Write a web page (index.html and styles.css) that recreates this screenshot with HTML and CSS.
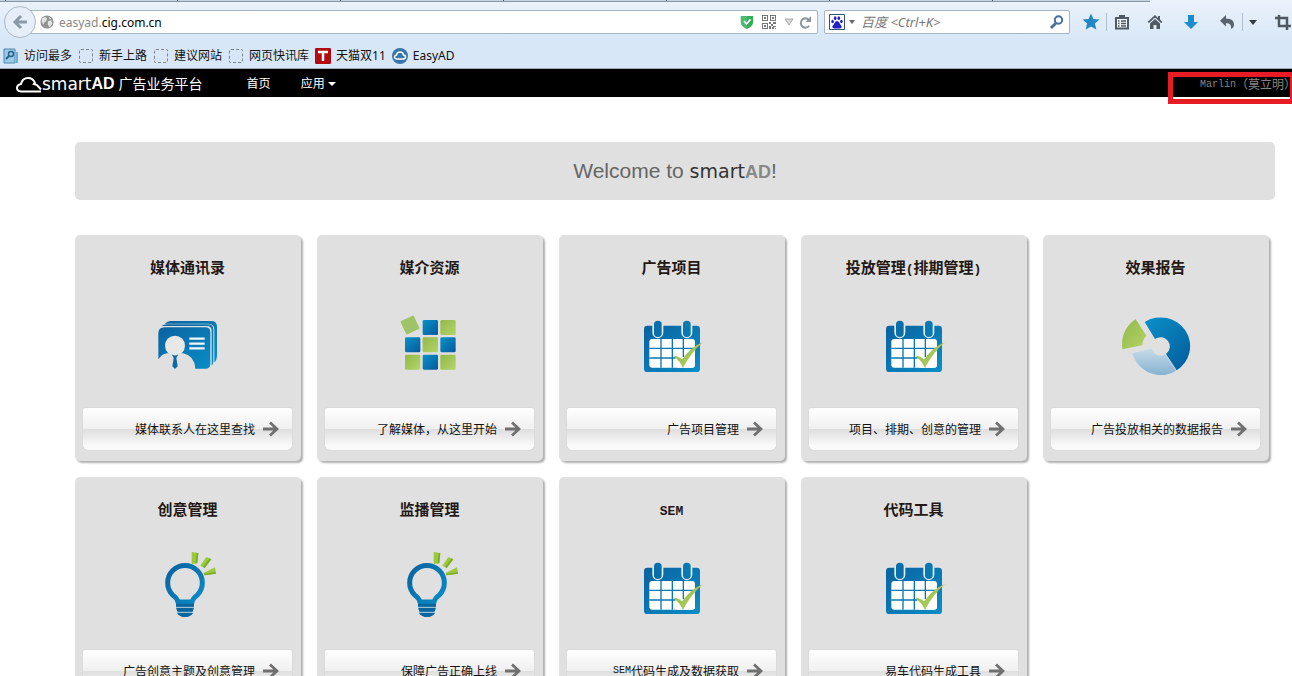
FILE: index.html
```html
<!DOCTYPE html>
<html lang="zh-CN">
<head>
<meta charset="utf-8">
<title>smartAD 广告业务平台</title>
<link rel="stylesheet" href="styles.css">
</head>
<body>
<svg class="defs" aria-hidden="true">
  <defs>
    <linearGradient id="blue" x1="0" y1="0" x2="1" y2="1"><stop offset="0" stop-color="#0a62a0"/><stop offset="1" stop-color="#0a8dc6"/></linearGradient>
    <linearGradient id="blueDown" x1="0" y1="0" x2="1" y2="1"><stop offset="0" stop-color="#0a92c8"/><stop offset="1" stop-color="#045a9c"/></linearGradient>
    <linearGradient id="green" x1="0" y1="0" x2="1" y2="1"><stop offset="0" stop-color="#92b848"/><stop offset="1" stop-color="#b4d468"/></linearGradient>
    <linearGradient id="pale" x1="0" y1="0" x2="0" y2="1"><stop offset="0" stop-color="#c6dbe8"/><stop offset="1" stop-color="#86b2d2"/></linearGradient>
  </defs>
  <symbol id="i-contacts" viewBox="234 225 240 240">
    <path d="M284 281q8-8 18-8h122q17 0 17 17v88q0 12-8 20V300q0-19-18-19z" fill="url(#blue)"/>
    <path d="M274 288q8-5 17-5h123q16 0 16 16v95q0 8-5 13V303q0-15-15-15z" fill="url(#blue)"/>
    <path d="M284 292h122q15 0 15 15v94q0 15-15 15h-30q-2-38-36-46H290q-14 2-25 18v-77q0-19 19-19z" fill="url(#blue)"/>
    <circle cx="315" cy="347" r="30" fill="#e8e8e8"/>
    <path d="M266 416q0-36 28-45l14 4h14l14-4q38 9 38 45z" fill="#e0e0e0"/>
    <path d="M305 373q10 7 20 0l-6 11 4 25-8 8-8-8 4-25z" fill="#0a6aa6"/>
    <path d="M358 326h46M358 341h46M358 355h46" stroke="#eef6fb" stroke-width="7"/>
  </symbol>
  <symbol id="i-tiles" viewBox="234 225 240 240">
    <rect x="272" y="263" width="44" height="44" rx="3" fill="#9fc468" transform="rotate(-25 294 285)"/>
    <g fill="url(#blueDown)"><rect x="332" y="270" width="46" height="45" rx="4"/><rect x="279" y="322" width="46" height="45" rx="4"/><rect x="385" y="322" width="46" height="45" rx="4"/><rect x="332" y="374" width="46" height="45" rx="4"/></g>
    <g fill="url(#green)"><rect x="385" y="270" width="46" height="45" rx="4"/><rect x="332" y="322" width="46" height="45" rx="4"/><rect x="279" y="374" width="46" height="45" rx="4"/><rect x="385" y="374" width="46" height="45" rx="4"/></g>
  </symbol>
  <symbol id="i-calendar" viewBox="234 225 240 240">
    <rect x="270" y="287" width="168" height="139" rx="10" fill="url(#blue)"/>
    <path d="M295 285v23a16.500 16.500 0 0 0 33 0v-23zM382 285v23a16.500 16.500 0 0 0 33 0v-23z" fill="#e0eef5"/>
    <rect x="300" y="272" width="23" height="49" rx="11" fill="#0a6ea9"/><rect x="387" y="272" width="23" height="49" rx="11" fill="#0a78b2"/>
    <rect x="286" y="327" width="137" height="86" rx="9" fill="#fff"/>
    <path d="M321 327v86M355 327v86M388 327v86M286 355h137M286 384h137" stroke="#0a78b2" stroke-width="4"/>
    <path d="M366 382l23-1 34-22v45q0 9-9 9h-44l-10-18z" fill="#fff"/>
    <path d="M359 377q12 0 25 11 28-38 63-52-36 32-60 77-9-19-28-36z" fill="url(#green)"/>
  </symbol>
  <symbol id="i-pie" viewBox="234 225 240 240">
    <path d="M320 276A88 86 0 0 1 416 421L384 372A27 27 0 0 0 351 327z" fill="url(#blueDown)"/>
    <path d="M282 370L341 356A27 27 0 0 0 382 373L414 422Q390 437 360 435 304 428 282 370z" fill="url(#pale)"/>
    <path d="M293 267L325 317Q313 329 313 346L253 358Q246 300 293 267z" fill="url(#green)"/>
  </symbol>
  <symbol id="i-bulb" viewBox="234 231 240 240">
    <path d="M324 396q-4-13-16-21a52 52 0 1 1 74 0q-12 8-16 21z" fill="none" stroke="url(#blue)" stroke-width="15"/>
    <path d="M318 401h54v8q0 9-4 15v7q-9 10-23 10t-23-10v-7q-4-6-4-15z" fill="#0a659f"/>
    <path d="M318 412h54M320 427h50" stroke="#b4d2e4" stroke-width="3"/>
    <path d="M365 246l20 3-3 30-17 4zM391 287l18-26 15 7-20 26zM401 309l34-17 3 19-35 5z" fill="#9cc93a"/>
    <path d="M380 249l5 1-3 29-6 2zM419 265l5 3-20 26-5-3zM402 311l36-5v5l-35 5z" fill="#7dac2c"/>
  </symbol>
  <symbol id="i-arrow" viewBox="0 0 16 16"><path d="M0 8h14M7 1.500L14 8 7 14.500" fill="none" stroke="#707070" stroke-width="2.800"/></symbol>
</svg>

<div class="window">
  <header class="chrome">
    <div class="tabs"></div>
    <div class="toolbar">
      <button class="back" aria-label="后退"><svg viewBox="0 0 16 16" width="16" height="16"><path d="M15 8H3M9 2L3 8l6 6" fill="none" stroke="#8a9aab" stroke-width="3"/></svg></button>
      <div class="address">
        <svg viewBox="0 0 16 16" width="14" height="14"><circle cx="8" cy="8" r="7.500" fill="#929292"/><path d="M2 4l4-2 2 2-1 3-2 1-1 3-2-3zM9 7l4-1 1 4-3 4-2-3zM10 2l3 2-2 1z" fill="#e4e4e4"/></svg>
        <label for="url">easyad.</label><input id="url" type="text" value="cig.com.cn">
        <button aria-label="安全"><svg viewBox="0 0 16 16" width="14" height="16"><path d="M1 1h14v7q0 5-7 8-7-3-7-8z" fill="#36ad57"/><path d="M1 1h7v15q-7-3-7-8z" fill="#4cba72"/><path d="M4.500 7l3 3 4.500-5" fill="none" stroke="#fff" stroke-width="1.800"/></svg></button>
        <button aria-label="二维码"><svg viewBox="0 0 14 14" width="14" height="14" fill="#777"><path fill-rule="evenodd" d="M0 0h6v6H0zM1 1v4h4V1zM8 0h6v6H8zM9 1v4h4V1zM0 8h6v6H0zM1 9v4h4V9z"/><path d="M2 2h2v2H2zM10 2h2v2h-2zM2 10h2v2H2zM7 7h2v2H7zM9 9h2v2H9zM11 7h3v2h-3zM7 11h2v3H7zM11 11h3v1h-3zM10 12h2v2h-2zM13 13h1v1h-1z"/></svg></button>
        <button aria-label="历史"><svg viewBox="0 0 10 8" width="10" height="8"><path d="M1 1h8L5 7z" fill="#d8d8d8" stroke="#aaa"/></svg></button>
        <button class="reload" aria-label="刷新"><svg viewBox="0 0 14 14" width="13" height="13"><path d="M11 10.500A5 5 0 1 1 10.500 4" fill="none" stroke="#8e979e" stroke-width="2.200"/><path d="M13 0v6.500H7z" fill="#8e979e"/></svg></button>
      </div>
      <div class="search">
        <button class="engine" aria-label="百度"><svg viewBox="0 0 16 16" width="16" height="16"><path d="M.5.500h15v15H.5z" fill="#fff" stroke="#33566f"/><g fill="#2420c8"><ellipse cx="3.600" cy="7.500" rx="1.300" ry="1.800"/><ellipse cx="6.200" cy="4.200" rx="1.300" ry="1.900"/><ellipse cx="9.800" cy="4.200" rx="1.300" ry="1.900"/><ellipse cx="12.400" cy="7.500" rx="1.300" ry="1.800"/><path d="M8 7q1.500 0 2.500 2t2 3q.5 2.500-2 2.500H5.500q-2.500 0-2-2.500 1-1 2-3T8 7z"/></g></svg><svg viewBox="0 0 6 4" width="6" height="4"><path d="M0 0h6L3 4z" fill="#666"/></svg></button>
        <input type="search" aria-label="搜索" placeholder="百度 &lt;Ctrl+K&gt;">
        <button aria-label="搜索"><svg viewBox="0 0 14 14" width="14" height="14"><circle cx="8.500" cy="5" r="3.700" fill="none" stroke="#446f9c" stroke-width="2"/><path d="M6 8L1 13" stroke="#446f9c" stroke-width="2.800"/></svg></button>
      </div>
      <div class="tools">
        <button class="star" aria-label="收藏"><svg viewBox="0 0 18 18" width="18" height="18"><path d="M9 .5l2.400 5.500 6 .6-4.500 4 1.400 6L9 13.500 3.700 16.600l1.400-6L.6 6.600l6-.6z" fill="#2187c5"/></svg></button>
        <button class="split" aria-label="书签"><svg viewBox="0 0 16 16" width="16" height="16"><path d="M2 4h12v10.500H2z" fill="#eef4fa" stroke="#4f5962" stroke-width="2"/><path d="M5 1h6v3H5z" fill="#4f5962"/><path d="M4 7h1.500M7 7h5M4 9.500h1.500M7 9.500h5M4 12h1.500M7 12h5" stroke="#4f5962" stroke-width="1.300"/></svg></button>
        <button aria-label="主页"><svg viewBox="0 0 16 16" width="16" height="16"><path d="M8 1L.5 8l1.500 1 6-5.500L14 9l1.500-1L13 5.500V2h-2v2z" fill="#4f5962"/><path d="M3 9.500l5-4.500 5 4.500V15H9.500v-4h-3v4H3z" fill="#4f5962"/></svg></button>
        <button aria-label="下载"><svg viewBox="0 0 16 16" width="16" height="16"><path d="M5 1h6v7h4l-7 7-7-7h4z" fill="#1a8cd0"/></svg></button>
        <button aria-label="撤销"><svg viewBox="0 0 16 16" width="16" height="16"><path d="M7 1v3.500q8 0 8 6 0 3-3 4.500 1-6-5-6v3.500L1 6.800z" fill="#59636c"/></svg></button>
        <button class="split narrow" aria-label="更多"><svg viewBox="0 0 8 5" width="8" height="5"><path d="M0 0h8L4 5z" fill="#333b42"/></svg></button>
        <button aria-label="截图"><svg viewBox="0 0 16 16" width="16" height="16"><path d="M4 1v11h12M0 4h12v12" fill="none" stroke="#4f5962" stroke-width="2.500"/></svg></button>
      </div>
    </div>
    <nav class="bookmarks" aria-label="书签栏">
      <a href="#"><svg viewBox="0 0 16 16" width="16" height="16"><path d="M1 1h11v14H1z" fill="#9ccbe6" stroke="#4e88b0"/><path d="M13 4h2v11h-2z" fill="#70aed4"/><circle cx="8" cy="6" r="2.500" fill="none" stroke="#28638f" stroke-width="1.500"/><path d="M6 8l-3 3" stroke="#28638f" stroke-width="2"/></svg>访问最多</a>
      <a href="#"><i class="blank"></i>新手上路</a>
      <a href="#"><i class="blank"></i>建议网站</a>
      <a href="#"><i class="blank"></i>网页快讯库</a>
      <a href="#"><svg viewBox="0 0 16 16" width="16" height="16"><rect width="16" height="16" rx="1" fill="#b20b10"/><path d="M3 4h10M8 4v9" stroke="#fff" stroke-width="2.500"/></svg>天猫双11</a>
      <a href="#"><svg viewBox="0 0 16 16" width="16" height="16"><circle cx="8" cy="8" r="8" fill="#3775ab"/><path d="M4.500 11q-2-.3-2-2t2-2q.5-3 3.500-3t3.500 3q2 .2 2 2t-2 2z" fill="none" stroke="#fff" stroke-width="1.500"/></svg>EasyAD</a>
    </nav>
  </header>

  <div class="sitebar">
    <a class="brand" href="#">
      <svg viewBox="0 0 26 17" width="26" height="17"><path d="M25 15.500H5q-4-.3-4-3.500t4-4q1.500-6 7-6 5 0 7 5l-1 1 3 1 4 4.500" fill="none" stroke="#fff" stroke-width="2"/></svg><span class="smart">smart</span><b>AD</b><span class="brand-cn">广告业务平台</span>
    </a>
    <nav class="menu"><a href="#">首页</a><a href="#">应用<svg viewBox="0 0 8 4" width="8" height="4"><path d="M0 0h8L4 4z" fill="#fff"/></svg></a></nav>
    <a class="user" href="#"><span class="latin">Marlin</span>（莫立明）</a>
    <div class="highlight"></div>
  </div>

  <main>
    <h1 class="welcome"><span>Welcome to <span class="smart">smart</span><span class="ad">AD</span>!</span></h1>
    <div class="cards">
      <section class="card"><h2>媒体通讯录</h2><svg class="pic"><use href="#i-contacts"/></svg><a href="#">媒体联系人在这里查找<svg><use href="#i-arrow"/></svg></a></section>
      <section class="card"><h2>媒介资源</h2><svg class="pic"><use href="#i-tiles"/></svg><a href="#">了解媒体，从这里开始<svg><use href="#i-arrow"/></svg></a></section>
      <section class="card"><h2>广告项目</h2><svg class="pic"><use href="#i-calendar"/></svg><a href="#">广告项目管理<svg><use href="#i-arrow"/></svg></a></section>
      <section class="card"><h2>投放管理<span class="latin">(</span>排期管理<span class="latin">)</span></h2><svg class="pic"><use href="#i-calendar"/></svg><a href="#">项目、排期、创意的管理<svg><use href="#i-arrow"/></svg></a></section>
      <section class="card"><h2>效果报告</h2><svg class="pic"><use href="#i-pie"/></svg><a href="#">广告投放相关的数据报告<svg><use href="#i-arrow"/></svg></a></section>
      <section class="card"><h2>创意管理</h2><svg class="pic"><use href="#i-bulb"/></svg><a href="#">广告创意主题及创意管理<svg><use href="#i-arrow"/></svg></a></section>
      <section class="card"><h2>监播管理</h2><svg class="pic"><use href="#i-bulb"/></svg><a href="#">保障广告正确上线<svg><use href="#i-arrow"/></svg></a></section>
      <section class="card"><h2><span class="latin">SEM</span></h2><svg class="pic"><use href="#i-calendar"/></svg><a href="#"><span class="latin">SEM</span>代码生成及数据获取<svg><use href="#i-arrow"/></svg></a></section>
      <section class="card"><h2>代码工具</h2><svg class="pic"><use href="#i-calendar"/></svg><a href="#">易车代码生成工具<svg><use href="#i-arrow"/></svg></a></section>
    </div>
  </main>
</div>
</body>
</html>
```
FILE: styles.css
```css
* { box-sizing: border-box; }
body { margin: 0; background: #fff; font: 12px/16px "Noto Sans", "Noto Sans CJK SC", sans-serif; color: #111; }
a { color: inherit; text-decoration: none; white-space: nowrap; }
button { border: 0; padding: 0; background: none; display: flex; align-items: center; justify-content: center; flex: none; }
input { border: 0; padding: 0; background: none; outline: 0; font: inherit; min-width: 0; flex: 1; }
svg { display: block; flex: none; }
.defs { position: absolute; width: 0; height: 0; }
.latin { font-family: "Liberation Mono", monospace; line-height: 1; }
.window { height: 100vh; overflow: hidden; }

/* Browser frame */
.chrome { height: 69px; background: linear-gradient(#eaf2fb, #d8e7f7 60%, #d8e7f7); border-bottom: 1px solid #9aa9b8; }
.tabs { height: 2px; width: 89%; border-bottom: 1px solid #8797a8; background: repeating-linear-gradient(90deg, #c4d2e0 0 162px, #4b5866 162px 163px); background-position-x: 15px; }
.toolbar { height: 40px; display: flex; align-items: center; padding-left: 4px; }
.back { width: 32px; height: 32px; border: 1px solid #a9b8c8; border-radius: 50%; background: #e6eff9; position: relative; z-index: 1; }
.address, .search { height: 24px; display: flex; align-items: center; background: #fff; border: 1px solid #a5b5c5; border-radius: 2px; }
.address { flex: 1; margin-left: -8px; padding: 0 5px 0 11px; }
.address label, .address input { padding-top: 1px; }
.address label { color: #888; margin-left: 5px; }
.address button { margin-left: 8px; }
.address .reload { margin-left: 5px; }
.search { width: 246px; margin-left: 6px; padding: 0 5px 0 4px; }
.engine { gap: 4px; margin-right: 6px; }
.search input { font-size: 13px; }
.search input::placeholder { color: #777; font-style: italic; opacity: 1; }
.tools { display: flex; align-items: center; width: 222px; padding-left: 6px; }
.tools button { width: 36px; height: 18px; }
.tools .star { width: 30px; }
.tools .split { width: 31px; border-left: 1px solid #b3c0cd; }
.tools .narrow { width: 20px; margin-left: -3px; }
.tools .narrow + button { margin-left: 3px; }
.bookmarks { display: flex; gap: 6px; height: 27px; align-items: center; padding-left: 3px; }
.bookmarks a { display: flex; align-items: center; gap: 5px; }
.blank { width: 14px; height: 14px; margin: 0 1px; border: 1px dashed #7b848c; border-radius: 2px; }

/* Site header */
.sitebar { position: relative; height: 28px; background: #000; color: #fff; display: flex; align-items: center; padding: 2px 0 0 16px; }
.brand { display: flex; align-items: center; font-size: 17px; }
.smart { font-family: "DejaVu Sans", sans-serif; line-height: 1; }
.brand b { font: bold 16px "Liberation Sans", sans-serif; }
.brand-cn { font-size: 14px; margin-left: 4px; }
.menu { display: flex; gap: 30px; margin-left: 44px; }
.menu a { display: flex; align-items: center; gap: 3px; }
.user { display: flex; align-items: center; margin: 0 -4px 0 auto; padding-top: 2px; color: #858585; }
.user .latin { font-size: 10px; }
.highlight { position: absolute; top: 3px; right: -3px; width: 127px; height: 32px; border: 5px solid #e81c24; }

/* Landing page */
main { padding: 45px 17px 40px 75px; }
.welcome { height: 58px; margin: 0 0 35px; display: flex; align-items: center; justify-content: center; background: #e0e0e0; border-radius: 5px; font: 21px/26px "Liberation Sans", sans-serif; color: #666; }
.welcome .smart { color: #333; font-size: 19px; }
.welcome .ad { color: #888; font-size: 18px; font-weight: bold; }
.cards { display: grid; grid-template-columns: repeat(auto-fill, 226px); gap: 16px; }
.card { background: #e0e0e0; border-radius: 5px; box-shadow: 2px 2px 2px #b0b0b0; padding: 22px 9px 11px 8px; display: flex; flex-direction: column; align-items: center; font-family: "Noto Sans CJK SC", sans-serif; }
.card h2 { height: 20px; margin: 0 0 28px; font-size: 15px; line-height: 20px; color: #231815; }
.card h2 .latin { font-size: 13px; }
.pic { width: 80px; height: 80px; }
.card a { align-self: stretch; height: 42px; margin-top: 23px; padding-right: 13px; display: flex; align-items: center; justify-content: flex-end; border-radius: 2px 2px 5px 5px; background: linear-gradient(#fff, #f0f0f0 49%, #dfdfdf 51%, #fafafa 90%); box-shadow: 0 0 1px #aaa; }
.card a svg { width: 16px; height: 16px; margin-left: 8px; }
.card a .latin { font-size: 10px; }
```
